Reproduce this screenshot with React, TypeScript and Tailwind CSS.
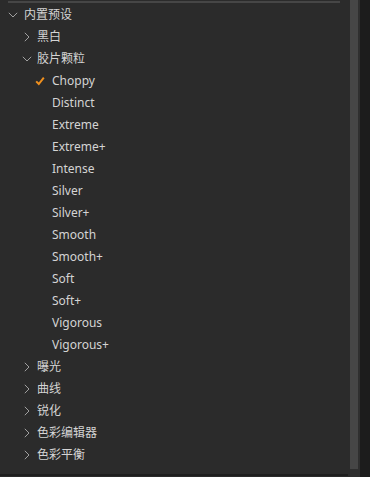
import React from 'react';

const Chevron = ({ open }: { open?: boolean }) => (
  <svg width="10" height="10" viewBox="0 0 10 10" className="shrink-0">
    {open ? (
      <path d="M0.8 2.8 L5 7 L9.2 2.8" fill="none" stroke="#a0a0a0" strokeWidth="1" />
    ) : (
      <path d="M2.8 0.8 L7 5 L2.8 9.2" fill="none" stroke="#a0a0a0" strokeWidth="1" />
    )}
  </svg>
);

const Check = () => (
  <svg width="10" height="10" viewBox="0 0 10 10" className="shrink-0">
    <path d="M1.2 5.4 L3.8 8 L8.8 1.6" fill="none" stroke="#f0901e" strokeWidth="2" />
  </svg>
);

const grains = [
  'Choppy',
  'Distinct',
  'Extreme',
  'Extreme+',
  'Intense',
  'Silver',
  'Silver+',
  'Smooth',
  'Smooth+',
  'Soft',
  'Soft+',
  'Vigorous',
  'Vigorous+',
];

const after = ['曝光', '曲线', '锐化', '色彩编辑器', '色彩平衡'];

const Row = ({ pad, children }: { pad: string; children: React.ReactNode }) => (
  <div className={`flex items-center h-[22px] ${pad}`}>{children}</div>
);

export default function App() {
  return (
    <div
      className="w-[370px] h-[477px] bg-[#1c1c1c] flex overflow-hidden text-[12px] text-[#d4d4d4]"
      style={{ fontFamily: '"Noto Sans", "Noto Sans CJK SC", sans-serif' }}
    >
      <div className="w-[350px] h-full bg-[#2b2b2b] flex flex-col">
        <div className="ml-[8px] mr-[10px] mt-[1px] h-[2px] bg-[#464646]" />
        <div className="flex-1 pt-[1px]">
          <Row pad="pl-[8px]">
            <Chevron open />
            <span className="ml-[6px]">内置预设</span>
          </Row>
          <Row pad="pl-[22px]">
            <Chevron />
            <span className="ml-[5px]">黑白</span>
          </Row>
          <Row pad="pl-[22px]">
            <Chevron open />
            <span className="ml-[5px]">胶片颗粒</span>
          </Row>
          {grains.map((g, i) => (
            <Row key={g} pad="pl-[35px]">
              {i === 0 ? <Check /> : <span className="w-[10px]" />}
              <span className="ml-[7px]">{g}</span>
            </Row>
          ))}
          {after.map((a) => (
            <Row key={a} pad="pl-[22px]">
              <Chevron />
              <span className="ml-[5px]">{a}</span>
            </Row>
          ))}
        </div>
        <div className="h-[2px] mb-[1px] w-[348px] bg-[#1e1e1e]" />
      </div>
      <div className="w-[10px] h-full bg-[#2f2f2f] flex">
        <div className="w-[8px] h-[469px] bg-[#464646]" />
      </div>
      <div className="flex-1 bg-[#1c1c1c]" />
    </div>
  );
}
